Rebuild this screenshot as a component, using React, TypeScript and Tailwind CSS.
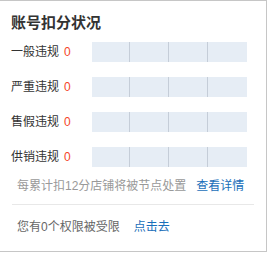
const rows = ['一般违规', '严重违规', '售假违规', '供销违规']

export default function App() {
  return (
    <div className="w-[277px] h-[253px] bg-white">
      <div
        className="w-[267px] h-[252px] border-t border-r border-b border-[#c6c6c6] bg-white text-[#333]"
        style={{ fontFamily: '"Liberation Sans", "Noto Sans CJK SC", sans-serif' }}
      >
        {/* title */}
        <div className="pl-[11px] pt-[13px] text-[15px] font-bold leading-[18px] text-[#333]">账号扣分状况</div>

        {/* rows */}
        <div className="mt-[10px] flex flex-col gap-[15px]">
          {rows.map((r) => (
            <div key={r} className="flex items-center h-[20px]">
              <div className="w-[92px] pl-[11px] text-[12px] leading-[20px] flex">
                <span>{r}</span>
                <span className="ml-[5px] text-[#f5451f]">0</span>
              </div>
              <div className="w-[155px] h-[20px] bg-[#e6edf5] flex">
                <div className="w-[37px] h-full" />
                <div className="w-[39px] h-full border-l border-[#c5cdd8]" />
                <div className="w-[39px] h-full border-l border-[#c5cdd8]" />
                <div className="flex-1 h-full border-l border-[#c5cdd8]" />
              </div>
            </div>
          ))}
        </div>

        {/* footer note */}
        <div className="mt-[9px] pl-[17px] text-[12px] leading-[20px] flex">
          <span className="text-[#999]">每累计扣12分店铺将被节点处置</span>
          <span className="ml-[10px] text-[#1a6fba]">查看详情</span>
        </div>

        <div className="mt-[8px] mx-[12px] h-px bg-[#e8e8e8]" />

        <div className="mt-[12px] pl-[17px] text-[12px] leading-[20px] flex">
          <span className="text-[#666]">您有0个权限被受限</span>
          <span className="ml-[14px] text-[#1a6fba]">点击去</span>
        </div>
      </div>
    </div>
  )
}
